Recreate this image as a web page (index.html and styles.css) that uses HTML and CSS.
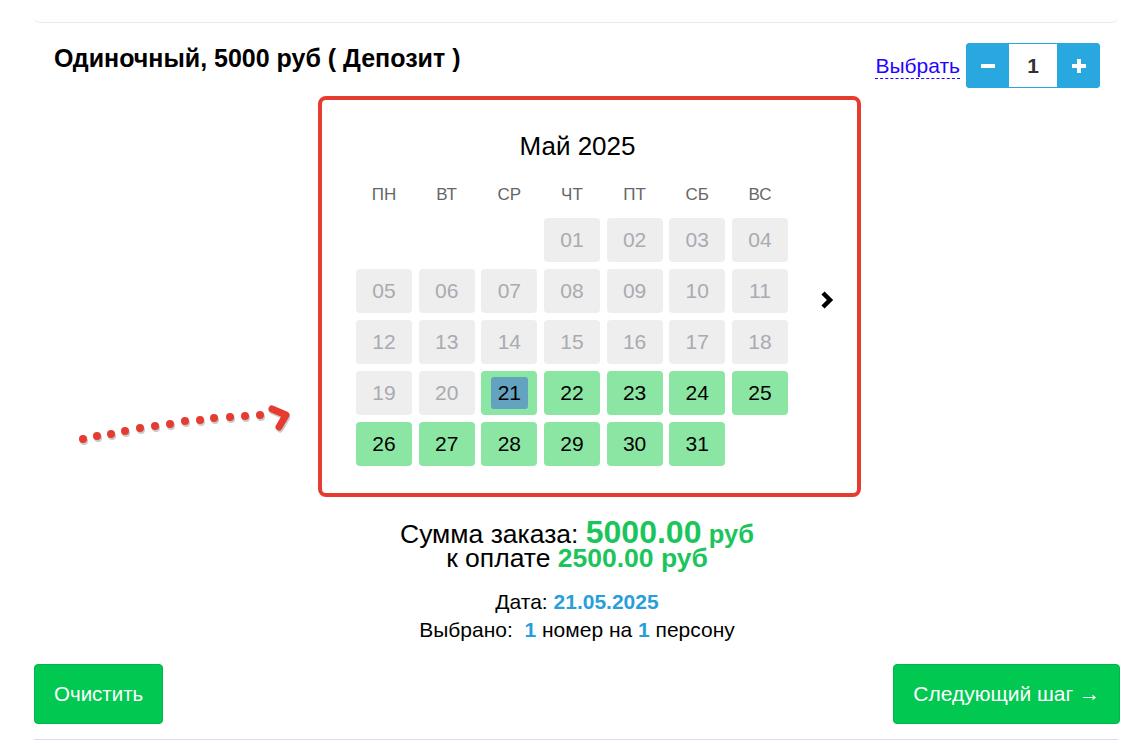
FILE: index.html
```html
<!DOCTYPE html>
<html lang="ru">
<head>
    <meta charset="UTF-8">
    <meta name="viewport" content="width=device-width, initial-scale=1.0">
    <title>Бронирование номера</title>
    <link rel="stylesheet" href="styles.css">
</head>
<body>
    <div class="page">
        <div class="top-card"></div>

        <div class="room">
            <div class="room-head">
                <h3 class="room-title">Одиночный, 5000 руб ( Депозит )</h3>
                <div class="room-pick">
                    <a class="pick-link" href="#">Выбрать</a>
                    <div class="counter">
                        <button class="cnt-btn" type="button">
                            <svg width="14" height="14" viewBox="0 0 14 14"><rect x="0" y="5" width="14" height="4" fill="#fff"/></svg>
                        </button>
                        <div class="cnt-value">1</div>
                        <button class="cnt-btn" type="button">
                            <svg width="14" height="14" viewBox="0 0 14 14"><rect x="0" y="5" width="14" height="4" fill="#fff"/><rect x="5" y="0" width="4" height="14" fill="#fff"/></svg>
                        </button>
                    </div>
                </div>
            </div>

            <div class="cal-wrap">
                <!-- red hint arrow pointing at the calendar -->
                <svg class="hint-arrow" width="230" height="50" viewBox="0 0 230 50">
                    <g fill="#c9c9c9" transform="translate(1,2)">
                        <circle cx="23" cy="43" r="4"/><circle cx="37" cy="40" r="4"/><circle cx="51" cy="38" r="4"/>
                        <circle cx="65" cy="35" r="4"/><circle cx="80" cy="32" r="4"/><circle cx="95" cy="30" r="4"/>
                        <circle cx="110" cy="28" r="4"/><circle cx="125" cy="25" r="4"/><circle cx="140" cy="24" r="4"/>
                        <circle cx="154" cy="22" r="4"/><circle cx="170" cy="21" r="4"/><circle cx="185" cy="20" r="4"/>
                        <circle cx="200" cy="19" r="4"/>
                        <polyline points="212,13 226,19 219,31" fill="none" stroke="#c9c9c9" stroke-width="7" stroke-linecap="round" stroke-linejoin="round"/>
                    </g>
                    <g fill="#e53b30">
                        <circle cx="23" cy="43" r="4"/><circle cx="37" cy="40" r="4"/><circle cx="51" cy="38" r="4"/>
                        <circle cx="65" cy="35" r="4"/><circle cx="80" cy="32" r="4"/><circle cx="95" cy="30" r="4"/>
                        <circle cx="110" cy="28" r="4"/><circle cx="125" cy="25" r="4"/><circle cx="140" cy="24" r="4"/>
                        <circle cx="154" cy="22" r="4"/><circle cx="170" cy="21" r="4"/><circle cx="185" cy="20" r="4"/>
                        <circle cx="200" cy="19" r="4"/>
                        <polyline points="212,13 226,19 219,31" fill="none" stroke="#e53b30" stroke-width="7" stroke-linecap="round" stroke-linejoin="round"/>
                    </g>
                </svg>

                <div class="calendar">
                    <div class="cal-title">Май 2025</div>
                    <div class="cal-grid">
                        <div class="cal-dow">пн</div><div class="cal-dow">вт</div><div class="cal-dow">ср</div>
                        <div class="cal-dow">чт</div><div class="cal-dow">пт</div><div class="cal-dow">сб</div>
                        <div class="cal-dow">вс</div>

                        <div></div><div></div><div></div>
                        <div class="day off">01</div><div class="day off">02</div><div class="day off">03</div><div class="day off">04</div>

                        <div class="day off">05</div><div class="day off">06</div><div class="day off">07</div><div class="day off">08</div>
                        <div class="day off">09</div><div class="day off">10</div><div class="day off">11</div>

                        <div class="day off">12</div><div class="day off">13</div><div class="day off">14</div><div class="day off">15</div>
                        <div class="day off">16</div><div class="day off">17</div><div class="day off">18</div>

                        <div class="day off">19</div><div class="day off">20</div>
                        <div class="day free"><span class="picked">21</span></div>
                        <div class="day free">22</div><div class="day free">23</div><div class="day free">24</div><div class="day free">25</div>

                        <div class="day free">26</div><div class="day free">27</div><div class="day free">28</div><div class="day free">29</div>
                        <div class="day free">30</div><div class="day free">31</div>
                    </div>
                    <a class="cal-next" href="#">
                        <svg width="14" height="18" viewBox="0 0 14 18"><polyline points="3,2 10,9 3,16" fill="none" stroke="#000" stroke-width="4.5"/></svg>
                    </a>
                </div>
            </div>

            <div class="summary">
                <div class="sum-line"><span class="sum-text">Сумма заказа:</span> <b class="sum-big">5000.00</b> <b class="sum-cur">руб</b></div>
                <div class="sum-line"><span class="sum-text">к оплате</span> <b class="sum-pay">2500.00 руб</b></div>
            </div>

            <div class="details">
                <div>Дата: <b class="accent">21.05.2025</b></div>
                <div>Выбрано:&nbsp; <b class="accent">1</b> номер на <b class="accent">1</b> персону</div>
            </div>

            <div class="actions">
                <button class="btn-green" type="button">Очистить</button>
                <button class="btn-green btn-next" type="button">Следующий шаг →</button>
            </div>
        </div>
        <div class="bottom-line"></div>
    </div>
</body>
</html>
```

FILE: styles.css
```css
body {
    margin: 0;
    background-color: #fff;
    font-family: "Liberation Sans", Arial, Helvetica, sans-serif;
    color: #000;
}

.page {
    padding: 0 24px 0 34px;
}

.top-card {
    height: 22px;
    margin-right: 2px;
    border-bottom: 1px solid #e6eaf0;
    border-radius: 0 0 6px 6px;
}

.room-head {
    display: flex;
    justify-content: space-between;
    align-items: flex-start;
    padding: 20px 20px 0 20px;
}

.room-title {
    margin: 0;
    font-size: 25px;
    font-weight: bold;
    line-height: 30px;
}

.room-pick {
    display: flex;
    align-items: center;
    gap: 6px;
}

.pick-link {
    color: #1f06ff;
    font-size: 21px;
    text-decoration: none;
    border-bottom: 1px dashed #1f06ff;
    line-height: 24px;
    margin-top: 2px;
}

.counter {
    display: flex;
    height: 45px;
    border-radius: 4px;
    overflow: hidden;
    background-color: #29a8df;
}

.cnt-btn {
    width: 43px;
    border: 0;
    padding: 0;
    background-color: #29a8df;
    display: flex;
    align-items: center;
    justify-content: center;
}

.cnt-value {
    width: 48px;
    background-color: #fff;
    border-top: 1px solid #29a8df;
    border-bottom: 1px solid #29a8df;
    box-sizing: border-box;
    text-align: center;
    line-height: 43px;
    font-size: 21px;
    font-weight: bold;
    color: #333;
}

/* calendar */
.cal-wrap {
    position: relative;
    margin-top: 8px;
}

.hint-arrow {
    position: absolute;
    left: 26px;
    top: 300px;
}

.calendar {
    position: relative;
    width: 501px;
    margin-left: 284px;
    border: 4px solid #e53b30;
    border-radius: 8px;
    padding: 31px 0 27px 34px;
}

.cal-title {
    font-size: 26px;
    line-height: 30px;
    text-align: center;
    padding-right: 58px;
    margin-bottom: 24px;
}

.cal-grid {
    display: grid;
    grid-template-columns: repeat(7, 56px);
    grid-template-rows: 26px;
    grid-auto-rows: 44px;
    column-gap: 6.67px;
    row-gap: 7px;
}

.cal-dow {
    text-transform: uppercase;
    text-align: center;
    font-size: 17px;
    line-height: 20px;
    color: #666;
}

.day {
    display: flex;
    align-items: center;
    justify-content: center;
    border-radius: 4px;
    font-size: 21px;
}

.day.off {
    background-color: #eeeeee;
    color: #a8abb0;
}

.day.free {
    background-color: #8ce6a3;
    color: #000;
}

.picked {
    display: flex;
    align-items: center;
    justify-content: center;
    width: 37px;
    height: 32px;
    border-radius: 3px;
    background-color: #64a3c0;
}

.cal-next {
    position: absolute;
    right: 23px;
    top: 50%;
    margin-top: -6px;
    line-height: 0;
}

/* order summary */
.summary {
    text-align: center;
    margin-top: 22px;
}

.sum-line {
    font-size: 26.5px;
    line-height: 26px;
    height: 26px;
}

.sum-line span,
.sum-line b {
    display: inline-block;
    line-height: 26px;
    height: 26px;
}

.sum-big {
    font-size: 32px;
    color: #1cc55c;
}

.sum-cur,
.sum-pay {
    font-size: 26.5px;
    color: #1cc55c;
}

.sum-cur {
    font-size: 25.5px;
}

.details {
    text-align: center;
    font-size: 21px;
    line-height: 28px;
    margin-top: 17px;
}

.accent {
    color: #289fdb;
}

.actions {
    display: flex;
    justify-content: space-between;
    margin-top: 20px;
}

.btn-green {
    height: 60px;
    padding: 0 19px;
    border: 1px solid #00b54a;
    border-radius: 4px;
    background-color: #00c851;
    color: #fff;
    font-family: "Liberation Sans", Arial, sans-serif;
    font-size: 20.5px;
}

.btn-next {
    font-size: 21px;
}

.bottom-line {
    margin-top: 15px;
    margin-right: 2px;
    border-top: 1px solid #dcd8fb;
}
```
